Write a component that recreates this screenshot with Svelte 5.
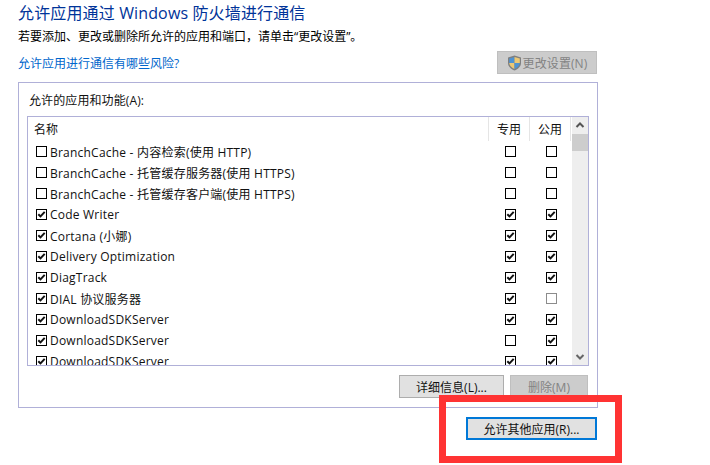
<script>
  const rows = [
    { name: 'BranchCache - 内容检索(使用 HTTP)', on: false, a: false, b: false },
    { name: 'BranchCache - 托管缓存服务器(使用 HTTPS)', on: false, a: false, b: false },
    { name: 'BranchCache - 托管缓存客户端(使用 HTTPS)', on: false, a: false, b: false },
    { name: 'Code Writer', on: true, a: true, b: true },
    { name: 'Cortana (小娜)', on: true, a: true, b: true },
    { name: 'Delivery Optimization', on: true, a: true, b: true },
    { name: 'DiagTrack', on: true, a: true, b: true },
    { name: 'DIAL 协议服务器', on: true, a: true, b: false, dim: true },
    { name: 'DownloadSDKServer', on: true, a: true, b: true },
    { name: 'DownloadSDKServer', on: true, a: false, b: true },
    { name: 'DownloadSDKServer', on: true, a: true, b: true }
  ];
</script>

{#snippet box(checked, dim)}
  <svg class="box" width="11" height="11" viewBox="0 0 11 11">
    <rect x="0.5" y="0.5" width="10" height="10" fill="#fff" stroke={dim ? '#8c8c8c' : '#000'} />
    {#if checked}
      <path d="M2.3 5.2 L4.5 7.4 L8.7 2.9" fill="none" stroke="#111" stroke-width="2" />
    {/if}
  </svg>
{/snippet}

<div class="page">
  <h1>允许应用通过 Windows 防火墙进行通信</h1>
  <p class="sub">若要添加、更改或删除所允许的应用和端口，请单击“更改设置”。</p>
  <div class="linkrow">
    <span class="link">允许应用进行通信有哪些风险?</span>
    <button class="btn disabled settings">
      <svg width="15" height="16" viewBox="0 0 15 16">
        <path d="M7.5 0.5 L14 2.5 V8 C14 11.5 11 14 7.5 15.5 C4 14 1 11.5 1 8 V2.5 Z" fill="#7f7f7f" />
        <path d="M7.5 2 V8 H2.2 V3.5 Z" fill="#4f93d2" />
        <path d="M7.5 2 L12.8 3.5 V8 H7.5 Z" fill="#ecc874" />
        <path d="M2.2 8 H7.5 V14 C4.8 12.8 2.4 10.8 2.2 8 Z" fill="#ecc874" />
        <path d="M7.5 8 H12.8 C12.6 10.8 10.2 12.8 7.5 14 Z" fill="#4f93d2" />
      </svg>
      更改设置(N)
    </button>
  </div>

  <section class="panel">
    <div class="label">允许的应用和功能(A):</div>
    <div class="list">
      <div class="table">
        <div class="head">
          <div class="hname">名称</div>
          <div class="hcol">专用</div>
          <div class="hcol">公用</div>
        </div>
        <div class="rows">
          {#each rows as r}
            <div class="row">
              <div class="name">{@render box(r.on)}<span>{r.name}</span></div>
              <div class="cell">{@render box(r.a)}</div>
              <div class="cell">{@render box(r.b, r.dim)}</div>
            </div>
          {/each}
        </div>
      </div>
      <div class="scrollbar">
        <svg class="arrow" width="16" height="17" viewBox="0 0 16 17"><path d="M4.5 10 L8 6.5 L11.5 10" fill="none" stroke="#555" stroke-width="2" /></svg>
        <div class="thumb"></div>
        <div class="track"></div>
        <svg class="arrow" width="16" height="17" viewBox="0 0 16 17"><path d="M4.5 7 L8 10.5 L11.5 7" fill="none" stroke="#666" stroke-width="2" /></svg>
      </div>
    </div>
    <div class="actions">
      <button class="btn details">详细信息(L)...</button>
      <button class="btn disabled remove">删除(M)</button>
    </div>
  </section>

  <div class="footer">
    <button class="btn primary">允许其他应用(R)...</button>
  </div>

  <div class="annotation"></div>
</div>

<style>
  :global(body) {
    margin: 0;
    background: #fff;
  }
  .page {
    position: relative;
    width: 710px;
    height: 465px;
    overflow: hidden;
    box-sizing: border-box;
    padding: 3px 112px 0 18px;
    font-family: "Open Sans", "Noto Sans CJK SC", sans-serif;
    font-size: 12px;
    color: #111;
  }
  h1 {
    margin: 0;
    font-size: 16px;
    font-weight: 400;
    line-height: 20px;
    letter-spacing: 0.14px;
    color: #003399;
  }
  .sub {
    margin: 5px 0 0;
    line-height: 17px;
    color: #000;
  }
  .linkrow {
    display: flex;
    justify-content: space-between;
    align-items: center;
    margin-top: 6px;
    height: 23px;
    padding-right: 1px;
  }
  .link {
    color: #0066cc;
  }
  .btn {
    box-sizing: border-box;
    font: inherit;
    color: #111;
    background: #e1e1e1;
    border: 1px solid #adadad;
    padding: 0;
    display: flex;
    align-items: center;
    justify-content: center;
  }
  .btn.disabled {
    background: #cccccc;
    border-color: #bfbfbf;
    color: #838383;
  }
  .settings {
    width: 100px;
    height: 23px;
    gap: 1px;
    letter-spacing: 0.1px;
  }
  .panel {
    box-sizing: border-box;
    margin-top: 8px;
    height: 326px;
    border: 1px solid #b0b0d8;
    padding: 9px 8px 0;
  }
  .label {
    line-height: 17px;
    padding-left: 2px;
    letter-spacing: 0.1px;
  }
  .list {
    box-sizing: border-box;
    display: flex;
    height: 250px;
    margin-top: 7px;
    border: 1px solid #b0b0d8;
  }
  .table {
    flex: 1;
    min-width: 0;
    overflow: hidden;
  }
  .head {
    display: flex;
    height: 24px;
    line-height: 25px;
  }
  .hname {
    flex: 1;
    padding-left: 6px;
    border-right: 1px solid #e5e5e5;
  }
  .hcol {
    box-sizing: border-box;
    width: 41px;
    text-align: center;
    border-right: 1px solid #e5e5e5;
  }
  .row {
    display: flex;
    align-items: center;
    height: 21px;
  }
  .name {
    flex: 1;
    display: flex;
    align-items: center;
    gap: 3px;
    padding-left: 8px;
    white-space: nowrap;
    letter-spacing: 0.22px;
  }
  .cell {
    box-sizing: border-box;
    width: 41px;
    padding-left: 1px;
    display: flex;
    justify-content: center;
  }
  .box {
    flex: none;
    display: block;
  }
  .scrollbar {
    flex: none;
    width: 16px;
    margin-left: 1px;
    display: flex;
    flex-direction: column;
    background: #eeeeee;
  }
  .arrow {
    display: block;
    flex: none;
  }
  .thumb {
    height: 17px;
    background: #cdcdcd;
    flex: none;
  }
  .track {
    flex: 1;
  }
  .actions {
    display: flex;
    justify-content: flex-end;
    gap: 6px;
    margin-top: 9px;
    padding-right: 1px;
  }
  .details {
    width: 105px;
    height: 23px;
  }
  .remove {
    width: 78px;
    height: 23px;
  }
  .footer {
    display: flex;
    justify-content: flex-end;
    margin-top: 9px;
    padding-right: 1px;
  }
  .primary {
    width: 131px;
    height: 23px;
    border: 2px solid #0078d7;
  }
  .annotation {
    position: absolute;
    left: 439px;
    top: 395px;
    width: 183px;
    height: 68px;
    box-sizing: border-box;
    border: 7px solid #ff3333;
    pointer-events: none;
  }
</style>
